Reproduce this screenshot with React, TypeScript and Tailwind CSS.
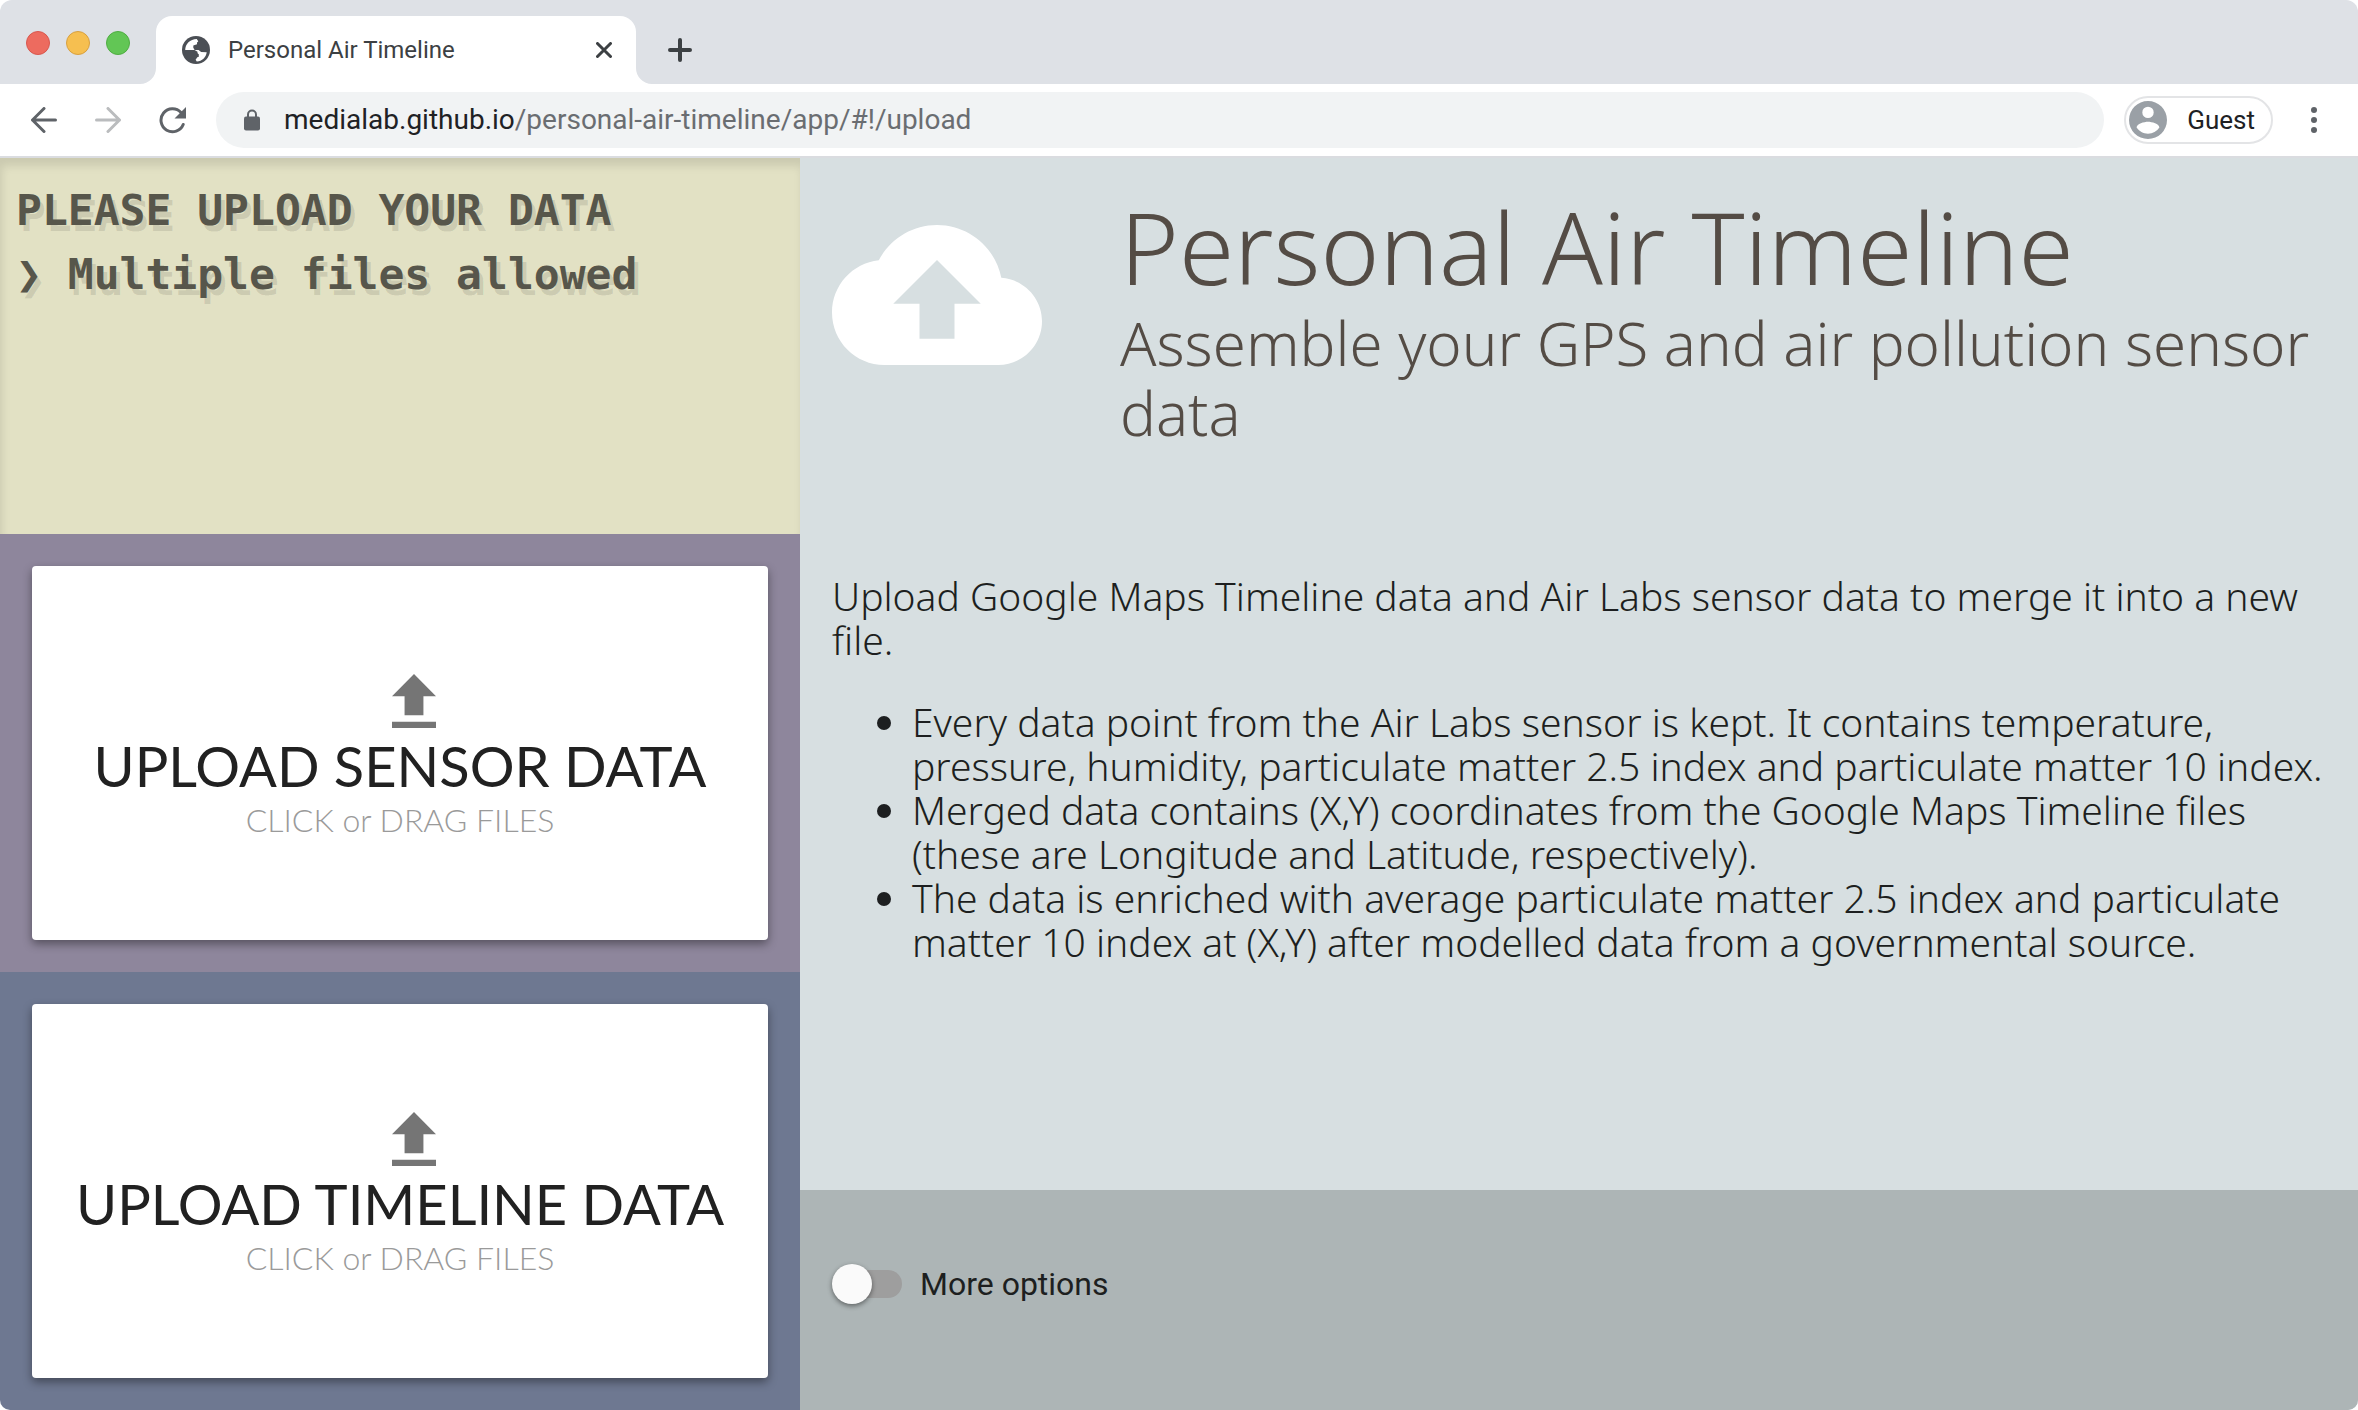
import React from "react";

function UploadCard({ title, className }: { title: string; className: string }) {
  return (
    <section className={`flex p-8 ${className}`}>
      <button
        type="button"
        className="flex w-full flex-col items-center justify-center rounded-[4px] bg-white pt-2 font-['Lato',sans-serif] shadow-[0_4px_10px_rgba(0,0,0,0.4)]"
      >
        <svg viewBox="5 3 14 17" className="ml-7 h-[54px] w-[44px] fill-[#757575]" preserveAspectRatio="none" aria-hidden="true">
          <path d="M9 16h6v-6h4l-7-7-7 7h4zm-4 2h14v2H5z" />
        </svg>
        <span className="mt-1 text-[56px] leading-[68px] text-[#212121]">{title}</span>
        <span className="text-[32px] leading-10 font-light text-[#9a9a9a]">CLICK or DRAG FILES</span>
      </button>
    </section>
  );
}

function BrowserChrome() {
  return (
    <header className="font-['Roboto',sans-serif]">
      <div className="flex h-[84px] items-end rounded-t-[12px] bg-[#dee1e6] pl-[26px]">
        <div className="flex gap-4 self-stretch pt-[31px]">
          <button type="button" aria-label="Close window" className="size-6 rounded-full border border-[#d8574e] bg-[#ed6b5f]" />
          <button type="button" aria-label="Minimize window" className="size-6 rounded-full border border-[#d8a040] bg-[#f6bf50]" />
          <button type="button" aria-label="Zoom window" className="size-6 rounded-full border border-[#4fad42] bg-[#62c655]" />
        </div>
        <svg viewBox="0 0 16 16" className="ml-[10px] size-4 shrink-0 fill-white" aria-hidden="true">
          <path d="M16 0v16H0A16 16 0 0 0 16 0z" />
        </svg>
        <div className="flex h-[68px] w-[480px] items-center rounded-t-[16px] bg-white pr-[24px] pl-[26px]">
          <svg viewBox="0 0 28 28" className="size-7" aria-hidden="true">
            <circle cx="14" cy="14" r="14" className="fill-[#4b4f55]" />
            <path
              d="M3.200 14.200C3.200 8 8 3.200 14.800 3l1.700 2.200-1.500 1.300v1.700l-3.700 1.300v2.300l1.300 2.200h4l2.500 2 5.600.200c-.500 5-4.700 9-9.900 9.200l-1.200-1.700 1.700-2.400 1.500-.600v-2.400l-1.800-1.300H9.500l-2.200-2.800z"
              className="fill-white"
            />
            <path d="M3 14h9.500l3 1.800v3.400h-3.300v3.300l-1.800 2.300A11.500 11.500 0 0 1 3 14zM15 3l7 3 3 8-3.800 1.800-3-3.500-3.800-.300v-2l2.600-1.300V6.500z" className="fill-[#4b4f55]" />
          </svg>
          <span className="ml-[18px] flex-1 text-[24px] text-[#3c4043]">Personal Air Timeline</span>
          <button type="button" aria-label="Close tab">
            <svg viewBox="0 0 16 16" className="size-4 stroke-[#3c4043]" strokeWidth="3" strokeLinecap="round" aria-hidden="true">
              <path d="M1.500 1.500l13 13M14.500 1.500l-13 13" />
            </svg>
          </button>
        </div>
        <svg viewBox="0 0 16 16" className="size-4 shrink-0 fill-white" aria-hidden="true">
          <path d="M0 0v16h16A16 16 0 0 1 0 0z" />
        </svg>
        <button type="button" aria-label="New tab" className="mb-[22px] ml-4">
          <svg viewBox="0 0 24 24" className="size-6 stroke-[#3c4043]" strokeWidth="4" strokeLinecap="round" aria-hidden="true">
            <path d="M12 2v20M2 12h20" />
          </svg>
        </button>
      </div>
      <div className="flex h-[74px] items-center border-b-2 border-[#dadce0] bg-white pr-10 pl-[31px]">
        <button type="button" aria-label="Back">
          <svg viewBox="0 0 26 26" className="size-[26px] fill-none stroke-[#5f6368]" strokeWidth="3" strokeLinecap="round" strokeLinejoin="round" aria-hidden="true">
            <path d="M13 1.500L1.500 13 13 24.500M1.500 13h23" />
          </svg>
        </button>
        <button type="button" aria-label="Forward" className="ml-[38px]">
          <svg viewBox="0 0 26 26" className="size-[26px] fill-none stroke-[#babcbe]" strokeWidth="3" strokeLinecap="round" strokeLinejoin="round" aria-hidden="true">
            <path d="M13 1.500L24.500 13 13 24.500M24.500 13h-23" />
          </svg>
        </button>
        <button type="button" aria-label="Reload" className="ml-[38px]">
          <svg viewBox="0 0 27 28" className="h-7 w-[27px]" aria-hidden="true">
            <path d="M22 6.500A11.500 11.500 0 1 0 24.200 18.500" className="fill-none stroke-[#5f6368]" strokeWidth="3" strokeLinecap="round" />
            <path d="M27 1v11.500H15.500z" className="fill-[#5f6368]" />
          </svg>
        </button>
        <form className="ml-[30px] flex h-14 flex-1 items-center rounded-full bg-[#f1f3f4] pl-7">
          <svg viewBox="0 0 16 22" className="h-[22px] w-4" aria-hidden="true">
            <path d="M4 9V5.500a4 4 0 0 1 8 0V9" className="fill-none stroke-[#5f6368]" strokeWidth="2" />
            <rect y="7.500" width="16" height="14" rx="2" className="fill-[#5f6368]" />
          </svg>
          <div className="relative ml-6 flex flex-1 text-[28px] leading-8">
            <span aria-hidden="true" className="text-[#202124]">
              medialab.github.io<span className="text-[#6a6d71]">/personal-air-timeline/app/#!/upload</span>
            </span>
            <input
              type="text"
              aria-label="Address"
              className="absolute inset-0 w-full bg-transparent text-transparent outline-none"
            />
          </div>
        </form>
        <button type="button" className="ml-5 flex h-12 items-center rounded-full border-2 border-[#e3e4e6] pr-4 pl-[3px]">
          <svg viewBox="2 2 20 20" className="size-[38px] fill-[#9aa0a6]" aria-hidden="true">
            <path fillRule="evenodd" d="M12 2a10 10 0 1 0 0 20 10 10 0 0 0 0-20zm0 3a3 3 0 1 1 0 6 3 3 0 0 1 0-6zm0 14.200c-2.500 0-4.710-1.280-6-3.220.03-1.990 4-3.080 6-3.080s5.970 1.090 6 3.080a7.200 7.200 0 0 1-6 3.220z" />
          </svg>
          <span className="ml-5 text-[26px] text-[#202124]">Guest</span>
        </button>
        <button type="button" aria-label="Menu" className="ml-[37px]">
          <svg viewBox="0 0 8 28" className="h-7 w-2 fill-[#5f6368]" aria-hidden="true">
            <circle cx="4" cy="4" r="3" />
            <circle cx="4" cy="14" r="3" />
            <circle cx="4" cy="24" r="3" />
          </svg>
        </button>
      </div>
    </header>
  );
}

export default function App() {
  return (
    <div className="flex min-h-screen flex-col overflow-hidden rounded-b-[10px] bg-white">
      <BrowserChrome />
      <div className="grid flex-1 grid-cols-[400fr_779fr]">
        <aside className="grid grid-rows-[376fr_438fr_438fr]">
          <section className="bg-[#e2e1c4] px-4 pt-5 font-['DejaVu_Sans_Mono',monospace] text-[43px] leading-[64px] font-bold text-[#57564b] shadow-[inset_2px_8px_8px_rgba(0,0,0,0.1)] [text-shadow:4px_6px_0_rgba(0,0,0,0.1)]">
            <p>PLEASE UPLOAD YOUR DATA</p>
            <p>&#x276F; Multiple files allowed</p>
          </section>
          <UploadCard title="UPLOAD SENSOR DATA" className="bg-[#8e869c]" />
          <UploadCard title="UPLOAD TIMELINE DATA" className="bg-[#6e7891]" />
        </aside>
        <main className="flex flex-col bg-[#d7dfe1] font-['Noto_Sans',sans-serif] font-light">
          <div className="flex-1 p-8">
            <div className="flex gap-[78px] text-[#544c45]">
              <svg viewBox="0 0 24 24" className="size-[210px] shrink-0 fill-white" aria-hidden="true">
                <path d="M19.350 10.040C18.670 6.590 15.640 4 12 4 9.110 4 6.600 5.640 5.350 8.040 2.340 8.360 0 10.910 0 14c0 3.310 2.690 6 6 6h13c2.760 0 5-2.240 5-5 0-2.640-2.050-4.780-4.650-4.960zM14 13v4h-4v-4H7l5-5 5 5h-3z" />
              </svg>
              <div>
                <h1 className="text-[100px] leading-[112px] font-light">Personal Air Timeline</h1>
                <p className="mt-1.5 text-[60px] leading-[70px]">Assemble your GPS and air pollution sensor data</p>
              </div>
            </div>
            <div className="mt-[126px] text-[39px] leading-[44px] text-[#1d1f20]">
              <p>Upload Google Maps Timeline data and Air Labs sensor data to merge it into a new file.</p>
              <ul className="mt-[38px] list-disc pl-20">
                <li>
                  Every data point from the Air Labs sensor is kept. It contains temperature, pressure, humidity,
                  particulate matter 2.5 index and particulate matter 10 index.
                </li>
                <li>
                  Merged data contains (X,Y) coordinates from the Google Maps Timeline files (these are Longitude and
                  Latitude, respectively).
                </li>
                <li>
                  The data is enriched with average particulate matter 2.5 index and particulate matter 10 index at
                  (X,Y) after modelled data from a governmental source.
                </li>
              </ul>
            </div>
          </div>
          <footer className="h-[220px] bg-[#adb5b6] px-8 pt-[74px]">
            <label className="flex w-fit cursor-pointer items-center gap-[18px] font-['Roboto',sans-serif] text-[32px] leading-10 font-normal text-[#1d1f20]">
              <input
                type="checkbox"
                role="switch"
                className="relative h-10 w-[70px] appearance-none before:absolute before:top-1.5 before:left-0.5 before:h-7 before:w-[68px] before:rounded-full before:bg-[#9e9e9e] after:absolute after:top-0 after:left-0 after:size-10 after:rounded-full after:bg-[#fafafa] after:shadow-[0_2px_5px_rgba(0,0,0,0.45)] checked:after:left-[30px]"
              />
              More options
            </label>
          </footer>
        </main>
      </div>
    </div>
  );
}
